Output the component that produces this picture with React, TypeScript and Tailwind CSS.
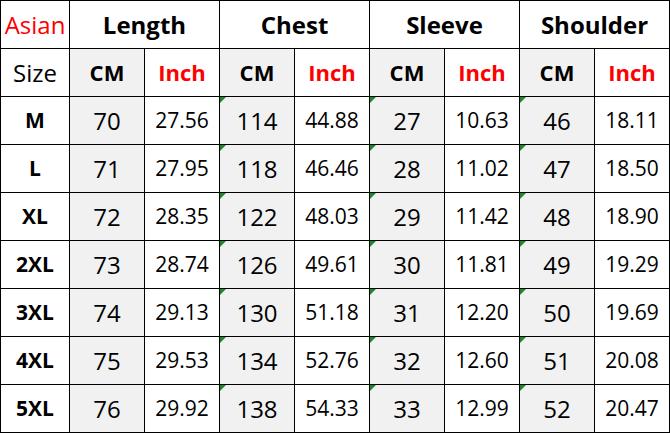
import React from "react";

const rows: [string, string, string, string, string, string, string, string, string][] = [
  ["M", "70", "27.56", "114", "44.88", "27", "10.63", "46", "18.11"],
  ["L", "71", "27.95", "118", "46.46", "28", "11.02", "47", "18.50"],
  ["XL", "72", "28.35", "122", "48.03", "29", "11.42", "48", "18.90"],
  ["2XL", "73", "28.74", "126", "49.61", "30", "11.81", "49", "19.29"],
  ["3XL", "74", "29.13", "130", "51.18", "31", "12.20", "50", "19.69"],
  ["4XL", "75", "29.53", "134", "52.76", "32", "12.60", "51", "20.08"],
  ["5XL", "76", "29.92", "138", "54.33", "33", "12.99", "52", "20.47"],
];

const cell = "flex items-center justify-center border-r border-b border-black";

function Tri() {
  return (
    <span className="absolute left-0 top-0 w-0 h-0 border-t-[6px] border-t-[#1a8a2a] border-r-[6px] border-r-transparent" />
  );
}

export default function App() {
  return (
    <div
      className="w-[670px] h-[433px] bg-white text-black"
      style={{ fontFamily: '"Open Sans", "Noto Sans", sans-serif' }}
    >
      <div className="grid grid-cols-[69px_repeat(8,75px)] auto-rows-[48px] border-l border-t border-black">
        <div className={`${cell} text-[24px] text-[#ff0000]`}>Asian</div>
        {["Length", "Chest", "Sleeve", "Shoulder"].map((h) => (
          <div key={h} className={`${cell} col-span-2 text-[24px] font-bold`}>
            {h}
          </div>
        ))}
        <div className={`${cell} text-[24px]`}>Size</div>
        {[0, 1, 2, 3].map((i) => (
          <React.Fragment key={i}>
            <div className={`${cell} bg-[#f1f1f1] text-[22px] font-bold`}>CM</div>
            <div className={`${cell} text-[22px] font-bold text-[#ff0000]`}>Inch</div>
          </React.Fragment>
        ))}
        {rows.map((r) => (
          <React.Fragment key={r[0]}>
            <div className={`${cell} text-[21px] font-bold`}>{r[0]}</div>
            {[1, 3, 5, 7].map((c) => (
              <React.Fragment key={c}>
                <div className={`${cell} relative bg-[#f1f1f1] text-[24px]`}>
                  {c !== 1 && <Tri />}
                  {r[c]}
                </div>
                <div className={`${cell} text-[21px]`}>{r[c + 1]}</div>
              </React.Fragment>
            ))}
          </React.Fragment>
        ))}
      </div>
    </div>
  );
}
